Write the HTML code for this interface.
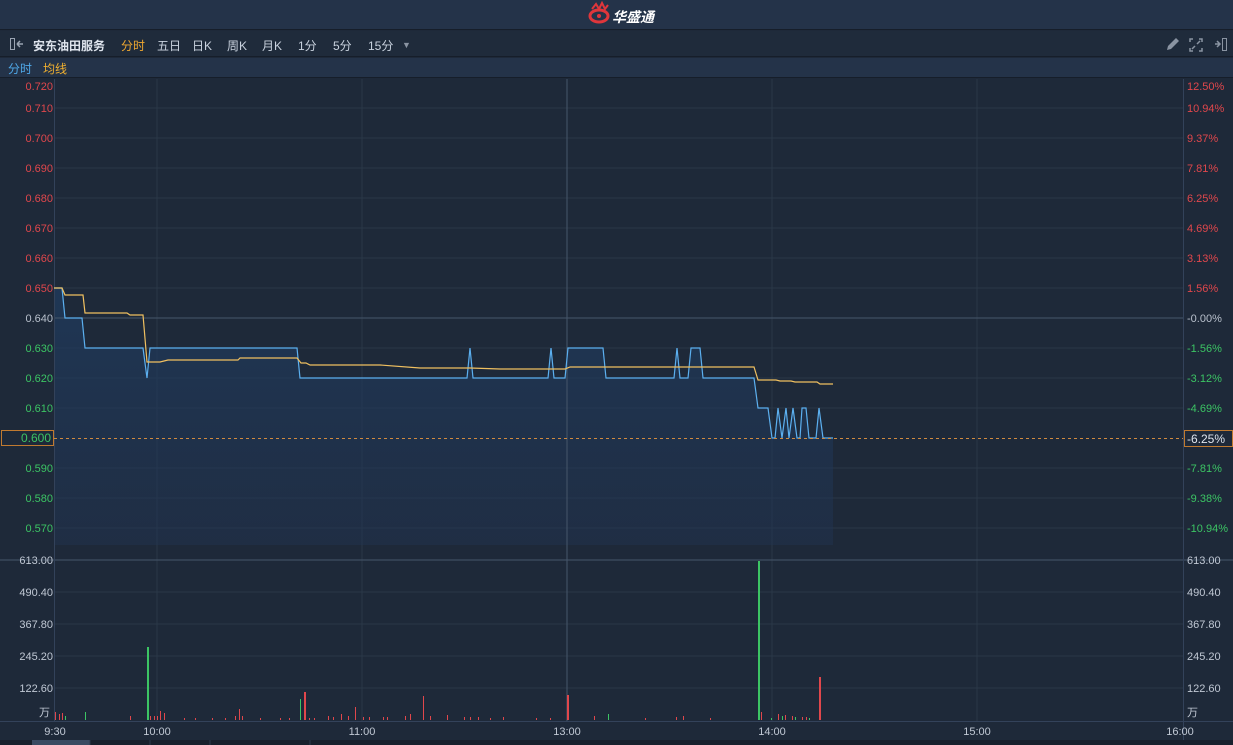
<!DOCTYPE html>
<html><head><meta charset="utf-8"><style>
*{margin:0;padding:0;box-sizing:border-box}
body{width:1233px;height:745px;overflow:hidden;background:#1e2939;font-family:"Liberation Sans","Noto Sans CJK SC",sans-serif;position:relative}
.top{position:absolute;left:0;top:0;width:1233px;height:30px;background:#243349;border-bottom:1px solid #161e2a}
.tb{position:absolute;left:0;top:31px;width:1233px;height:26px;background:#1f2b3b;border-bottom:1px solid #161e2a;font-size:12px;color:#c9d2de}
.tb span{position:absolute;top:6px}
.lg{position:absolute;left:0;top:58px;width:1233px;height:20px;background:#243349;border-bottom:1px solid #161e2a;font-size:12px}
svg{position:absolute;left:0;top:0}
.bars rect{shape-rendering:crispEdges}
</style></head><body>
<div class="top">
<svg width="40" height="30" style="left:588px"><ellipse cx="11" cy="16" rx="9" ry="6" fill="none" stroke="#e0363b" stroke-width="3"/><path d="M4 9 L8 4 L11 9 L14 3 L17 9 L20 5" fill="none" stroke="#e0363b" stroke-width="2"/><circle cx="11" cy="16" r="2" fill="#e0363b"/></svg>
<span style="position:absolute;left:612px;top:7px;font-size:14px;font-weight:bold;color:#fff;font-style:italic">华盛通</span>
</div>
<div class="tb">
<svg width="24" height="26" style="left:8px"><rect x="2.5" y="7.5" width="4" height="11" fill="none" stroke="#9aa4b2"/><path d="M9 13 h6 M9 13 l3 -3 M9 13 l3 3" stroke="#9aa4b2" stroke-width="1.5" fill="none"/></svg>
<span style="left:33px;font-weight:bold;color:#dfe5ee">安东油田服务</span>
<span style="left:121px;color:#f0a830">分时</span>
<span style="left:157px">五日</span>
<span style="left:192px">日K</span>
<span style="left:227px">周K</span>
<span style="left:262px">月K</span>
<span style="left:298px">1分</span>
<span style="left:333px">5分</span>
<span style="left:368px">15分</span>
<span style="left:402px;font-size:9px;top:9px;color:#8a94a2">▼</span>
<svg width="70" height="26" style="left:1163px"><path d="M4 19 l1 -4 l8 -8 l3 3 l-8 8z" fill="#8a94a2"/><path d="M30 8 h-3 v3 M36 8 h3 v3 M30 20 h-3 v-3 M36 20 h3 v-3 M29 18 l3 -3 M37 10 l-3 3" stroke="#8a94a2" stroke-width="1.5" fill="none"/><path d="M52 13 h5 M54 10 l3 3 l-3 3" stroke="#8a94a2" stroke-width="1.5" fill="none"/><rect x="59.5" y="7.5" width="4" height="12" fill="none" stroke="#8a94a2"/></svg>
</div>
<div class="lg"><span style="position:absolute;left:8px;top:2px;color:#4fa8e8">分时</span><span style="position:absolute;left:43px;top:2px;color:#f0b030">均线</span></div>

<svg width="1233" height="745" style="top:0" font-family="Liberation Sans" font-size="11">
<defs><linearGradient id="g" x1="0" y1="0" x2="0" y2="1"><stop offset="0" stop-color="#1f3b5e" stop-opacity="0.75"/><stop offset="1" stop-color="#213452" stop-opacity="0.45"/></linearGradient></defs>
<g stroke="#2a3748" stroke-width="1">
<line x1="54" y1="108" x2="1183" y2="108"/><line x1="54" y1="138" x2="1183" y2="138"/><line x1="54" y1="168" x2="1183" y2="168"/><line x1="54" y1="198" x2="1183" y2="198"/><line x1="54" y1="228" x2="1183" y2="228"/><line x1="54" y1="258" x2="1183" y2="258"/><line x1="54" y1="288" x2="1183" y2="288"/><line x1="54" y1="348" x2="1183" y2="348"/><line x1="54" y1="378" x2="1183" y2="378"/><line x1="54" y1="408" x2="1183" y2="408"/><line x1="54" y1="468" x2="1183" y2="468"/><line x1="54" y1="498" x2="1183" y2="498"/><line x1="54" y1="528" x2="1183" y2="528"/>
<line x1="54" y1="592" x2="1183" y2="592"/><line x1="54" y1="624" x2="1183" y2="624"/><line x1="54" y1="656" x2="1183" y2="656"/><line x1="54" y1="688" x2="1183" y2="688"/>
<line x1="157" y1="79" x2="157" y2="722"/><line x1="362" y1="79" x2="362" y2="722"/><line x1="772" y1="79" x2="772" y2="722"/><line x1="977" y1="79" x2="977" y2="722"/>
</g>
<path d="M54 288 H62 L65 318 H82 L85 348 H143 L147 378 L150 348 H297 L300 378 H467 L470 348 L473 378 H548 L551 348 L554 378 H565 L568 348 H603 L606 378 H674 L677 348 L680 378 H688 L691 348 H700 L703 378 H754 L758 408 H768 L772 438 L775 438 L778 408 L782 438 L786 408 L789 438 L793 408 L797 438 L800 438 L802 408 H806 L809 438 H816 L819 408 L823 438 H833 V545 H54Z" fill="url(#g)"/>
<line x1="567" y1="79" x2="567" y2="722" stroke="#46566a"/>
<line x1="54" y1="318" x2="1183" y2="318" stroke="#46566a"/>
<line x1="0" y1="560" x2="1233" y2="560" stroke="#46566a"/>
<line x1="0" y1="721.5" x2="1233" y2="721.5" stroke="#33425a"/>
<line x1="54.5" y1="79" x2="54.5" y2="722" stroke="#33425a"/>
<line x1="1183.5" y1="79" x2="1183.5" y2="745" stroke="#33425a"/>
<path d="M54 288 H62 L65 318 H82 L85 348 H143 L147 378 L150 348 H297 L300 378 H467 L470 348 L473 378 H548 L551 348 L554 378 H565 L568 348 H603 L606 378 H674 L677 348 L680 378 H688 L691 348 H700 L703 378 H754 L758 408 H768 L772 438 L775 438 L778 408 L782 438 L786 408 L789 438 L793 408 L797 438 L800 438 L802 408 H806 L809 438 H816 L819 408 L823 438 H833" fill="none" stroke="#5cb0f0" stroke-width="1.2"/>
<path d="M54 288 H62 L65 295 H83 L85 313 H127 L130 315 H143 L147 362 H160 L168 360 H238 L240 358 H297 L301 363 H306 L310 365 H380 L420 368 H470 L500 369 H565 L570 367 H754 L758 380 H776 L780 381 H791 L795 382 H817 L820 384 H833" fill="none" stroke="#f0c060" stroke-width="1.2"/>
<line x1="54" y1="438.5" x2="1183" y2="438.5" stroke="#d08a40" stroke-dasharray="3,3"/>
<g class="bars" fill="#e0474c">
<rect x="55" y="712" width="1" height="8"/><rect x="59" y="714" width="1" height="6"/><rect x="62" y="713" width="1" height="7"/><rect x="130" y="716" width="1" height="4"/><rect x="150" y="716" width="1" height="4"/><rect x="154" y="716" width="1" height="4"/><rect x="157" y="716" width="1" height="4"/><rect x="160" y="711" width="1" height="9"/><rect x="164" y="713" width="1" height="7"/><rect x="184" y="718" width="1" height="2"/><rect x="195" y="718" width="1" height="2"/><rect x="212" y="718" width="1" height="2"/><rect x="225" y="718" width="1" height="2"/><rect x="235" y="716" width="1" height="4"/><rect x="239" y="709" width="1" height="11"/><rect x="242" y="716" width="1" height="4"/><rect x="260" y="718" width="1" height="2"/><rect x="280" y="718" width="1" height="2"/><rect x="289" y="718" width="1" height="2"/><rect x="304" y="692" width="2" height="28"/><rect x="309" y="718" width="1" height="2"/><rect x="314" y="718" width="1" height="2"/><rect x="328" y="716" width="1" height="4"/><rect x="333" y="717" width="1" height="3"/><rect x="341" y="714" width="1" height="6"/><rect x="348" y="716" width="1" height="4"/><rect x="355" y="707" width="1" height="13"/><rect x="363" y="717" width="1" height="3"/><rect x="369" y="717" width="1" height="3"/><rect x="383" y="717" width="1" height="3"/><rect x="387" y="717" width="1" height="3"/><rect x="405" y="716" width="1" height="4"/><rect x="410" y="714" width="1" height="6"/><rect x="423" y="696" width="1" height="24"/><rect x="430" y="716" width="1" height="4"/><rect x="447" y="715" width="1" height="5"/><rect x="464" y="717" width="1" height="3"/><rect x="470" y="717" width="1" height="3"/><rect x="478" y="717" width="1" height="3"/><rect x="490" y="718" width="1" height="2"/><rect x="503" y="717" width="1" height="3"/><rect x="536" y="718" width="1" height="2"/><rect x="550" y="718" width="1" height="2"/><rect x="567" y="695" width="2" height="25"/><rect x="594" y="716" width="1" height="4"/><rect x="645" y="718" width="1" height="2"/><rect x="676" y="717" width="1" height="3"/><rect x="683" y="716" width="1" height="4"/><rect x="710" y="718" width="1" height="2"/><rect x="761" y="712" width="1" height="8"/><rect x="778" y="714" width="1" height="6"/><rect x="785" y="715" width="1" height="5"/><rect x="792" y="716" width="1" height="4"/><rect x="802" y="717" width="1" height="3"/><rect x="806" y="717" width="1" height="3"/><rect x="819" y="677" width="2" height="43"/>
</g>
<g class="bars" fill="#3cc464">
<rect x="65" y="716" width="1" height="4"/><rect x="85" y="712" width="1" height="8"/><rect x="147" y="647" width="2" height="73"/><rect x="300" y="699" width="1" height="21"/><rect x="608" y="714" width="1" height="6"/><rect x="758" y="561" width="2" height="159"/><rect x="771" y="718" width="1" height="2"/><rect x="782" y="716" width="1" height="4"/><rect x="795" y="717" width="1" height="3"/><rect x="809" y="718" width="1" height="2"/>
</g>
<g text-anchor="end" fill="#e0474c">
<text x="53" y="90">0.720</text><text x="53" y="112">0.710</text><text x="53" y="142">0.700</text><text x="53" y="172">0.690</text><text x="53" y="202">0.680</text><text x="53" y="232">0.670</text><text x="53" y="262">0.660</text><text x="53" y="292">0.650</text></g>
<text x="53" y="322" text-anchor="end" fill="#b8c0cc">0.640</text>
<g text-anchor="end" fill="#3cc464"><text x="53" y="352">0.630</text><text x="53" y="382">0.620</text><text x="53" y="412">0.610</text><text x="53" y="472">0.590</text><text x="53" y="502">0.580</text><text x="53" y="532">0.570</text></g>
<rect x="1.5" y="430.5" width="52" height="15" fill="#1e2939" stroke="#c07a30"/>
<text x="51" y="442" text-anchor="end" fill="#3cc464" font-size="12">0.600</text>
<g fill="#e0474c"><text x="1187" y="90">12.50%</text><text x="1187" y="112">10.94%</text><text x="1187" y="142">9.37%</text><text x="1187" y="172">7.81%</text><text x="1187" y="202">6.25%</text><text x="1187" y="232">4.69%</text><text x="1187" y="262">3.13%</text><text x="1187" y="292">1.56%</text></g>
<text x="1187" y="322" fill="#b8c0cc">-0.00%</text>
<g fill="#3cc464"><text x="1187" y="352">-1.56%</text><text x="1187" y="382">-3.12%</text><text x="1187" y="412">-4.69%</text><text x="1187" y="472">-7.81%</text><text x="1187" y="502">-9.38%</text><text x="1187" y="532">-10.94%</text></g>
<rect x="1184.5" y="430.5" width="48" height="16" fill="#1e2939" stroke="#c07a30"/>
<text x="1187" y="443" fill="#dfe5ee" font-size="12">-6.25%</text>
<g fill="#c0c8d4"><text x="53" y="564" text-anchor="end">613.00</text><text x="53" y="596" text-anchor="end">490.40</text><text x="53" y="628" text-anchor="end">367.80</text><text x="53" y="660" text-anchor="end">245.20</text><text x="53" y="692" text-anchor="end">122.60</text><text x="50" y="716" text-anchor="end">万</text>
<text x="1187" y="564">613.00</text><text x="1187" y="596">490.40</text><text x="1187" y="628">367.80</text><text x="1187" y="660">245.20</text><text x="1187" y="692">122.60</text><text x="1187" y="716">万</text>
<text x="55" y="735" text-anchor="middle">9:30</text><text x="157" y="735" text-anchor="middle">10:00</text><text x="362" y="735" text-anchor="middle">11:00</text><text x="567" y="735" text-anchor="middle">13:00</text><text x="772" y="735" text-anchor="middle">14:00</text><text x="977" y="735" text-anchor="middle">15:00</text><text x="1180" y="735" text-anchor="middle">16:00</text></g>
<rect x="0" y="740" width="1233" height="5" fill="#18212d"/>
<rect x="32" y="740" width="58" height="5" fill="#3a4b62"/>
<g stroke="#2c3a4c"><line x1="90" y1="740" x2="90" y2="745"/><line x1="150" y1="740" x2="150" y2="745"/><line x1="210" y1="740" x2="210" y2="745"/><line x1="310" y1="740" x2="310" y2="745"/></g>
</svg>
</body></html>
